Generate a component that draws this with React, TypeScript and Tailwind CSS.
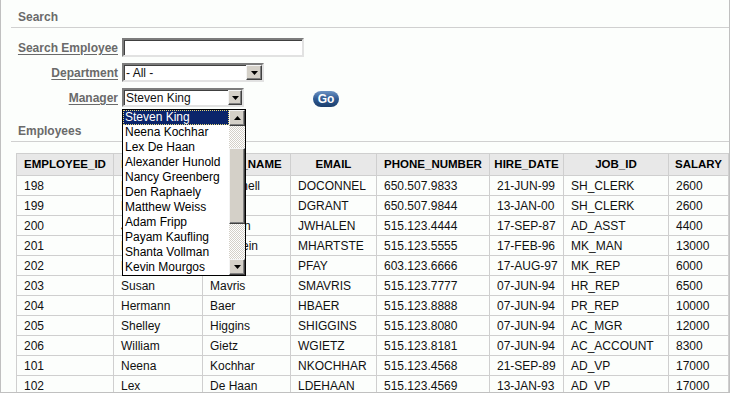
import React from 'react';

type Row = [string, string, string, string, string, string, string, string];

const columns = ['EMPLOYEE_ID', 'FIRST_NAME', 'LAST_NAME', 'EMAIL', 'PHONE_NUMBER', 'HIRE_DATE', 'JOB_ID', 'SALARY'];

const rows: Row[] = [
  ['198', 'Donald', 'OConnell', 'DOCONNEL', '650.507.9833', '21-JUN-99', 'SH_CLERK', '2600'],
  ['199', 'Douglas', 'Grant', 'DGRANT', '650.507.9844', '13-JAN-00', 'SH_CLERK', '2600'],
  ['200', 'Jennifer', 'Whalen', 'JWHALEN', '515.123.4444', '17-SEP-87', 'AD_ASST', '4400'],
  ['201', 'Michael', 'Hartstein', 'MHARTSTE', '515.123.5555', '17-FEB-96', 'MK_MAN', '13000'],
  ['202', 'Pat', 'Fay', 'PFAY', '603.123.6666', '17-AUG-97', 'MK_REP', '6000'],
  ['203', 'Susan', 'Mavris', 'SMAVRIS', '515.123.7777', '07-JUN-94', 'HR_REP', '6500'],
  ['204', 'Hermann', 'Baer', 'HBAER', '515.123.8888', '07-JUN-94', 'PR_REP', '10000'],
  ['205', 'Shelley', 'Higgins', 'SHIGGINS', '515.123.8080', '07-JUN-94', 'AC_MGR', '12000'],
  ['206', 'William', 'Gietz', 'WGIETZ', '515.123.8181', '07-JUN-94', 'AC_ACCOUNT', '8300'],
  ['101', 'Neena', 'Kochhar', 'NKOCHHAR', '515.123.4568', '21-SEP-89', 'AD_VP', '17000'],
  ['102', 'Lex', 'De Haan', 'LDEHAAN', '515.123.4569', '13-JAN-93', 'AD_VP', '17000'],
];

const managers = [
  'Steven King', 'Neena Kochhar', 'Lex De Haan', 'Alexander Hunold', 'Nancy Greenberg', 'Den Raphaely',
  'Matthew Weiss', 'Adam Fripp', 'Payam Kaufling', 'Shanta Vollman', 'Kevin Mourgos',
];

// classic 3D arrow button
const ArrowButton: React.FC<{ up?: boolean; className?: string }> = ({ up, className = '' }) => (
  <div
    className={`flex items-center justify-center bg-[#d4d0c8] border border-t-[#f4f4f4] border-l-[#f4f4f4] border-r-[#404040] border-b-[#404040] shadow-[inset_-1px_-1px_0_#808080] ${className}`}
  >
    <svg width="7" height="4" viewBox="0 0 7 4">
      <path d={up ? 'M3.5 0L7 4H0z' : 'M0 0h7L3.5 4z'} fill="#000" />
    </svg>
  </div>
);

const SectionTitle: React.FC<{ title: string }> = ({ title }) => (
  <div className="border-b border-[#d0d0d0] pb-[1px]">
    <h3 className="pl-[7px] text-[12px] leading-[18px] font-bold text-[#6a6a6a]">{title}</h3>
  </div>
);

const Label: React.FC<{ text: string }> = ({ text }) => (
  <span className="w-[107px] shrink-0 text-right text-[12px] font-bold text-[#6a6a6a] underline underline-offset-2">
    {text}
  </span>
);

const insetBox =
  'border-2 border-t-[#7c7c7c] border-l-[#7c7c7c] border-r-[#e2e2e2] border-b-[#e2e2e2] shadow-[inset_1px_1px_0_#404040] bg-white';

export default function App() {
  return (
    <div className="w-[730px] h-[393px] overflow-hidden border-l border-r border-b border-[#c0c0c0] bg-[#fcfefc] font-['Liberation_Sans',Arial,sans-serif] text-[#111]">
      <div className="ml-[10px] pt-[8px]">
        <SectionTitle title="Search" />

        {/* Search form */}
        <div className="mt-[10px] flex flex-col gap-[6px]">
          <div className="flex items-center gap-[4px] h-[19px]">
            <Label text="Search Employee" />
            <div className={`w-[182px] h-[19px] ${insetBox}`} />
          </div>
          <div className="flex items-center gap-[4px] h-[19px]">
            <Label text="Department" />
            <div className={`w-[142px] h-[19px] flex items-center justify-between ${insetBox}`}>
              <span className="pl-[2px] text-[12px] leading-none">- All -</span>
              <ArrowButton className="w-[16px] h-[15px]" />
            </div>
          </div>
          <div className="flex items-center gap-[4px] h-[19px]">
            <Label text="Manager" />
            <div className="relative">
              <div className={`w-[122px] h-[19px] flex items-center justify-between ${insetBox}`}>
                <span className="pl-[2px] text-[12px] leading-none">Steven King</span>
                <ArrowButton className="w-[14px] h-[15px]" />
              </div>

              {/* open dropdown list */}
              <div className="absolute left-0 top-[21px] z-10 w-[124px] h-[167px] border border-black bg-white flex">
                <ul className="flex-1 flex flex-col">
                  {managers.map((m, i) => (
                    <li
                      key={m}
                      className={
                        i === 0
                          ? 'h-[15px] leading-[13px] pl-[1px] text-[12px] text-white bg-[#0a246a] border border-dotted border-[#e6d77a] whitespace-nowrap'
                          : 'h-[15px] leading-[15px] pl-[2px] text-[12px] text-black whitespace-nowrap'
                      }
                    >
                      {m}
                    </li>
                  ))}
                </ul>
                <div className="w-[16px] flex flex-col bg-[repeating-conic-gradient(#d4d0c8_0_25%,#ffffff_0_50%)] bg-[length:2px_2px]">
                  <ArrowButton up className="w-[16px] h-[16px]" />
                  <div className="h-[22px]" />
                  <div className="h-[76px] bg-[#d4d0c8] border border-t-[#f4f4f4] border-l-[#f4f4f4] border-r-[#404040] border-b-[#404040] shadow-[inset_-1px_-1px_0_#808080]" />
                  <div className="flex-1" />
                  <ArrowButton className="w-[16px] h-[16px]" />
                </div>
              </div>
            </div>
            <button className="ml-[65px] mt-[2px] w-[26px] h-[16px] rounded-full bg-gradient-to-b from-[#6d93c4] via-[#2f5a92] to-[#1b3e6c] text-white text-[12px] font-bold leading-none flex items-center justify-center">
              Go
            </button>
          </div>
        </div>

        <div className="mt-[15px]">
          <SectionTitle title="Employees" />
        </div>

        {/* Employees table */}
        <div className="ml-[5px] mt-[11px] w-[713px] border-l border-t border-[#cfcfcf]">
          <div className="grid grid-cols-[97px_89px_88px_86px_113px_74px_105px_60px] bg-[#e8e8e8]">
            {columns.map((c) => (
              <div
                key={c}
                className="h-[22px] border-r border-b border-[#cfcfcf] flex items-center justify-center text-[11.5px] font-bold text-black"
              >
                {c}
              </div>
            ))}
          </div>
          {rows.map((r) => (
            <div key={r[0]} className="grid grid-cols-[97px_89px_88px_86px_113px_74px_105px_60px]">
              {r.map((v, i) => (
                <div
                  key={i}
                  className="h-[20px] border-r border-b border-[#cfcfcf] flex items-center pl-[7px] text-[12px] whitespace-nowrap overflow-hidden"
                >
                  {v}
                </div>
              ))}
            </div>
          ))}
        </div>
      </div>
    </div>
  );
}
